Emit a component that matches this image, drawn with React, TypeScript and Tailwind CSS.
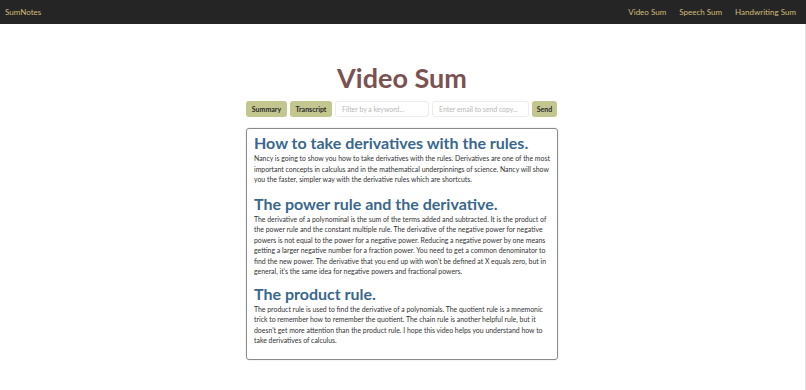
import React from "react";

const font = { fontFamily: 'Lato, "Open Sans", sans-serif' };

export default function App() {
  return (
    <div className="w-[806px] h-[390px] bg-white overflow-hidden" style={font}>
      <nav className="h-[24px] bg-[#252525] flex items-center justify-between pl-[5px] pr-[10px] text-[8px] text-[#d1bc78]">
        <span>SumNotes</span>
        <div className="flex gap-[13px]">
          <span>Video Sum</span>
          <span>Speech Sum</span>
          <span>Handwriting Sum</span>
        </div>
      </nav>
      <div className="flex border-r border-[#e5e5e5] h-[366px]">
        <div className="w-[312px] ml-[246px] flex flex-col">
          <h1 className="text-center font-bold text-[27px] leading-[28px] text-[#7b5252] mt-[40px]">Video Sum</h1>
          <div className="flex gap-[3px] mt-[9px] h-[16px]">
            <button className="bg-[#c4c690] rounded-[3px] text-[7px] font-bold text-[#2a2a2a] w-[41px]">Summary</button>
            <button className="bg-[#c4c690] rounded-[3px] text-[7px] font-bold text-[#2a2a2a] w-[42px]">Transcript</button>
            <input className="border border-[#ececec] rounded-[3px] w-[94px] px-[6px] text-[6.9px] placeholder:text-[#b8b8b8] outline-none" placeholder="Filter by a keyword..." />
            <input className="border border-[#ececec] rounded-[3px] w-[97px] px-[6px] text-[6.9px] placeholder:text-[#b8b8b8] outline-none" placeholder="Enter email to send copy..." />
            <button className="bg-[#c4c690] rounded-[3px] text-[7px] font-bold text-[#2a2a2a] w-[25px]">Send</button>
          </div>
          <div className="mt-[11px] border border-[#8a8a8a] rounded-[3px] h-[232px] px-[7px] pt-[4px] text-[#333] shadow-[0_0_2px_rgba(0,0,0,0.15)]">
            <h2 className="text-[16px] leading-[20px] font-bold text-[#3a678e]">How to take derivatives with the rules.</h2>
            <p className="text-[6.9px] leading-[10.5px]">Nancy is going to show you how to take derivatives with the rules. Derivatives are one of the most important concepts in calculus and in the mathematical underpinnings of science. Nancy will show you the faster, simpler way with the derivative rules which are shortcuts.</p>
            <h2 className="text-[16px] leading-[20px] font-bold text-[#3a678e] mt-[9px]">The power rule and the derivative.</h2>
            <p className="text-[6.9px] leading-[10.5px]">The derivative of a polynominal is the sum of the terms added and subtracted. It is the product of the power rule and the constant multiple rule. The derivative of the negative power for negative powers is not equal to the power for a negative power. Reducing a negative power by one means getting a larger negative number for a fraction power. You need to get a common denominator to find the new power. The derivative that you end up with won't be defined at X equals zero, but in general, it's the same idea for negative powers and fractional powers.</p>
            <h2 className="text-[16px] leading-[20px] font-bold text-[#3a678e] mt-[7px]">The product rule.</h2>
            <p className="text-[6.9px] leading-[10.5px]">The product rule is used to find the derivative of a polynomials. The quotient rule is a mnemonic trick to remember how to remember the quotient. The chain rule is another helpful rule, but it doesn't get more attention than the product rule. I hope this video helps you understand how to take derivatives of calculus.</p>
          </div>
        </div>
      </div>
    </div>
  );
}
